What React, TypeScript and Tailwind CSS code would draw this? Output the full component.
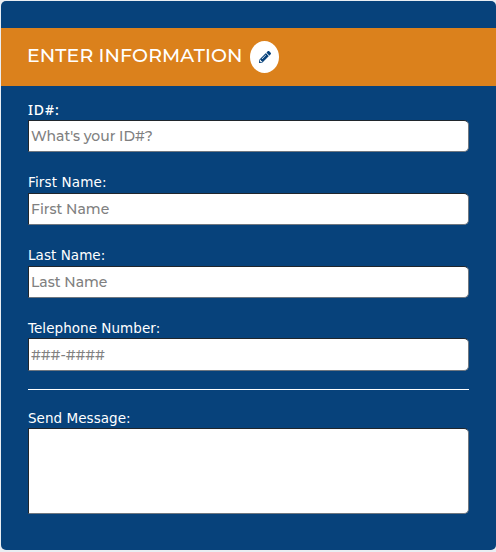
import { FaPencilAlt } from "react-icons/fa";

const control =
  "block w-full rounded-r-[5px] border border-t-[#20262c] border-l-[#20262c] border-r-[#6f7780] border-b-[#6f7780] bg-white font-['Montserrat','Inter',sans-serif] text-[14px] font-medium text-[#222] outline-none placeholder:text-[#808080] placeholder:opacity-100 pl-[2px]";

type FieldProps = {
  id: string;
  label: string;
  placeholder: string;
  labelClass: string;
  inputClass: string;
};

const fields: FieldProps[] = [
  { id: "idnum", label: "ID#:", placeholder: "What's your ID#?", labelClass: "h-[18px] font-['Noto_Sans',sans-serif] text-[14px] font-medium tracking-[0.9px]", inputClass: "h-8 tracking-[-0.03px]" },
  { id: "first", label: "First Name:", placeholder: "First Name", labelClass: "mt-[22px] h-[19px] tracking-[0.15px]", inputClass: "h-8 tracking-[0px]" },
  { id: "last", label: "Last Name:", placeholder: "Last Name", labelClass: "mt-[22px] h-[19px] tracking-[0.05px]", inputClass: "h-8 tracking-[0px]" },
  { id: "phone", label: "Telephone Number:", placeholder: "###-####", labelClass: "mt-[22px] h-[18px] tracking-[0.05px]", inputClass: "h-[33px] tracking-[-0.05px]" },
];

function Field({ id, label, placeholder, labelClass, inputClass }: FieldProps) {
  return (
    <>
      <label htmlFor={id} className={`block whitespace-nowrap leading-[16px] ${labelClass}`}>
        {label}
      </label>
      <input id={id} placeholder={placeholder} className={`${control} ${inputClass}`} />
    </>
  );
}

export default function App() {
  return (
    <div className="h-[552px] w-[496px] bg-[#e9eef3] pl-px pt-px">
      <main className="h-[549px] overflow-hidden rounded-[5px] bg-[#07427b] pt-[27px] font-['DejaVu_Sans',sans-serif] text-[13.5px] text-white">
        <header className="flex h-[58px] items-center bg-[#db811c] pl-[27px]">
          <h1 className="-ml-px mr-px w-[222px] whitespace-nowrap pb-0.5 font-['Montserrat','Inter',sans-serif] text-[19px] font-medium leading-6 tracking-[0.1px]">
            ENTER INFORMATION
          </h1>
          <button aria-label="Edit" className="flex h-8 w-[29px] items-center justify-center rounded-[50%] bg-white pb-px text-[#07427b]">
            <FaPencilAlt size={12} />
          </button>
        </header>
        <form className="ml-[27px] w-[441px] pt-4">
          {fields.map((field) => (
            <Field key={field.id} {...field} />
          ))}
          <hr className="mt-[18px] border-t border-white" />
          <label htmlFor="message" className="mt-5 block h-[18px] leading-[16px] tracking-[0.05px]">
            Send Message:
          </label>
          <textarea id="message" className={`${control} h-[86px] resize-none`} />
        </form>
      </main>
    </div>
  );
}
